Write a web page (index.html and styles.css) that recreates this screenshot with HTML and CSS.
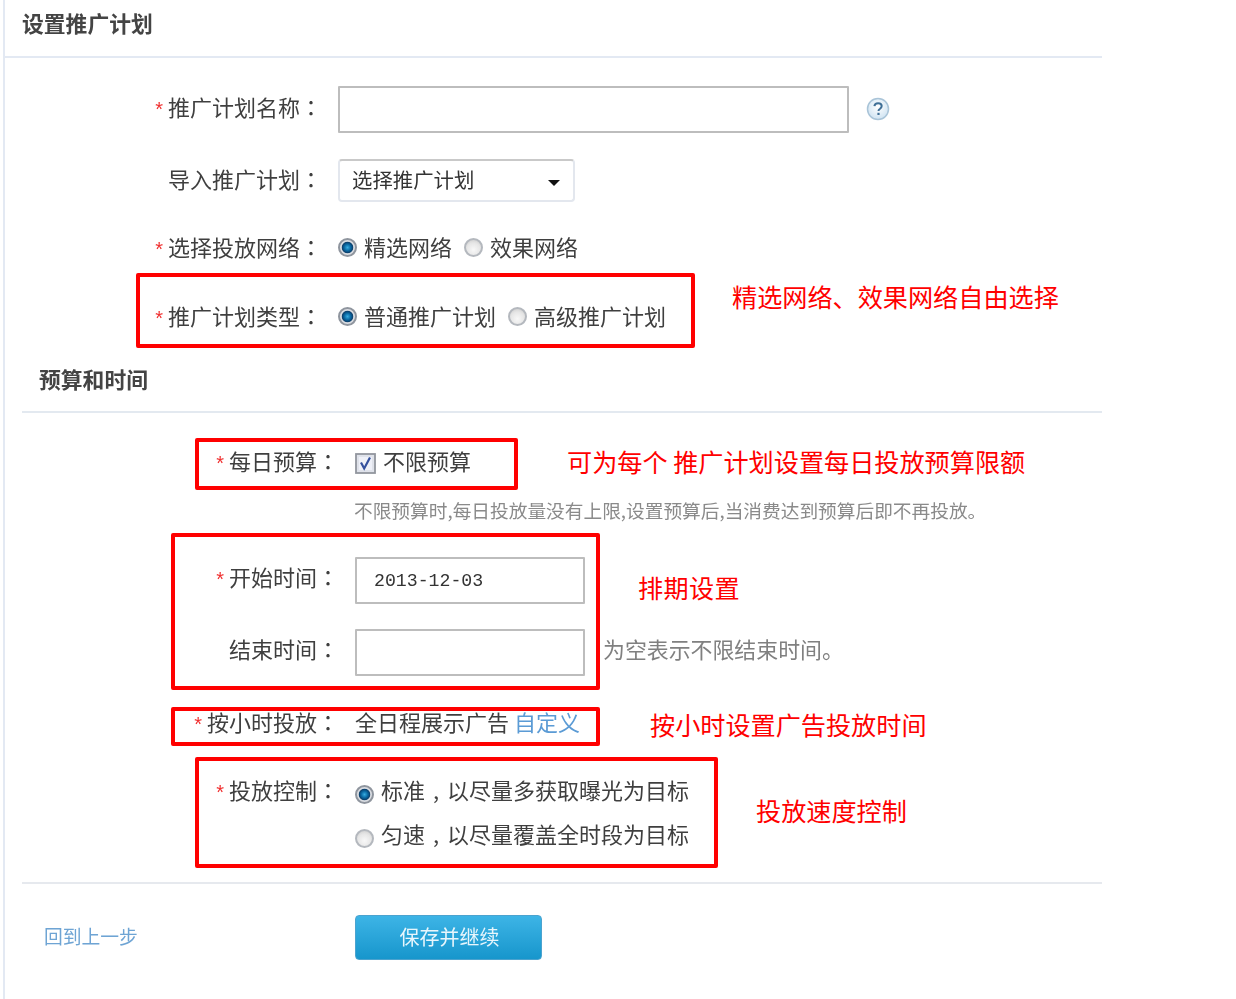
FILE: index.html
```html
<!DOCTYPE html>
<html lang="zh-CN">
<head>
<meta charset="utf-8">
<title>设置推广计划</title>
<link rel="stylesheet" href="styles.css">
</head>
<body>
<div class="page">
  <main class="panel">
    <h1 class="panel-title">设置推广计划</h1>

    <section class="form-a">
      <div class="row row-input">
        <label class="label"><span class="star">*</span>推广计划名称<span class="punct" lang="zh-TW">：</span></label>
        <div class="field field-name"></div>
        <svg class="help" width="24" height="24" viewBox="0 0 24 24"><defs><radialGradient id="hg" cx="50%" cy="40%" r="60%"><stop offset="0" stop-color="#ffffff"/><stop offset="1" stop-color="#cfe3f2"/></radialGradient></defs><circle cx="12" cy="12" r="10.5" fill="url(#hg)" stroke="#a9c4d8" stroke-width="1.5"/><path d="M8.4 9.2c.2-2 1.7-3 3.7-3 2.1 0 3.6 1.1 3.6 2.9 0 1.5-.9 2.2-1.9 2.9-.9.6-1.3 1-1.3 2" fill="none" stroke="#3f6f96" stroke-width="2"/><rect x="11.4" y="15.8" width="2.2" height="2.2" fill="#3f6f96"/></svg>
      </div>
      <div class="row row-select">
        <label class="label">导入推广计划<span class="punct" lang="zh-TW">：</span></label>
        <div class="select"><span class="select-text">选择推广计划</span><i class="caret"></i></div>
      </div>
      <div class="row row-net">
        <label class="label"><span class="star">*</span>选择投放网络<span class="punct" lang="zh-TW">：</span></label>
        <span class="radio on"></span><span class="opt">精选网络</span>
        <span class="radio"></span><span class="opt">效果网络</span>
      </div>
      <div class="row row-type">
        <label class="label"><span class="star">*</span>推广计划类型<span class="punct" lang="zh-TW">：</span></label>
        <span class="radio on"></span><span class="opt">普通推广计划</span>
        <span class="radio"></span><span class="opt">高级推广计划</span>
      </div>
    </section>

    <h2 class="section-title">预算和时间</h2>

    <section class="form-b">
      <div class="row row-budget">
        <label class="label"><span class="star">*</span>每日预算<span class="punct" lang="zh-TW">：</span></label>
        <svg class="check" width="21" height="21" viewBox="0 0 21 21"><rect x="1" y="1" width="19" height="19" fill="#dfe2ea" stroke="#92969e" stroke-width="1.8"/><rect x="4" y="4" width="13" height="13" fill="#eef0f8"/><path d="M6 9.5l3.2 6L15 4.5" fill="none" stroke="#34509e" stroke-width="2.2"/></svg>
        <span class="opt">不限预算</span>
      </div>
      <p class="hint">不限预算时,每日投放量没有上限,设置预算后,当消费达到预算后即不再投放。</p>
      <div class="row row-start">
        <label class="label"><span class="star">*</span>开始时间<span class="punct" lang="zh-TW">：</span></label>
        <div class="field field-date"><span class="date">2013-12-03</span></div>
      </div>
      <div class="row row-end">
        <label class="label">结束时间<span class="punct" lang="zh-TW">：</span></label>
        <div class="field field-date"></div>
        <span class="note">为空表示不限结束时间。</span>
      </div>
      <div class="row row-hour">
        <label class="label"><span class="star">*</span>按小时投放<span class="punct" lang="zh-TW">：</span></label>
        <span class="plain">全日程展示广告</span><a class="link">自定义</a>
      </div>
      <div class="row row-ctrl">
        <label class="label"><span class="star">*</span>投放控制<span class="punct" lang="zh-TW">：</span></label>
        <span class="radio on low"></span><span class="opt">标准<span class="comma">,</span>以尽量多获取曝光为目标</span>
      </div>
      <div class="row row-ctrl2">
        <span class="label"></span>
        <span class="radio low"></span><span class="opt">匀速<span class="comma">,</span>以尽量覆盖全时段为目标</span>
      </div>
    </section>

    <div class="footer">
      <a class="back">回到上一步</a>
      <button class="save" type="button">保存并继续</button>
    </div>
  </main>

  <div class="box box-1"></div>
  <div class="box box-2"></div>
  <div class="box box-3"></div>
  <div class="box box-4"></div>
  <div class="box box-5"></div>
  <div class="note-red n1">精选网络、效果网络自由选择</div>
  <div class="note-red n2">可为每个 推广计划设置每日投放预算限额</div>
  <div class="note-red n3">排期设置</div>
  <div class="note-red n4">按小时设置广告投放时间</div>
  <div class="note-red n5">投放速度控制</div>
</div>
</body>
</html>
```
FILE: styles.css
```css
* { box-sizing: border-box; }
html, body { margin: 0; padding: 0; background: #fff; }
body {
  font-family: "Noto Sans CJK SC", "Liberation Sans", sans-serif;
  font-size: 22px;
  line-height: 30px;
  color: #3f3f3f;
}
.page { position: relative; width: 1236px; height: 999px; overflow: hidden; }
.panel {
  margin-left: 3px;
  width: 1099px;
  height: 999px;
  border-left: 2px solid #e3e9f3;
  filter: blur(0.35px);
}
.panel-title {
  margin: 0;
  height: 58px;
  padding: 7px 0 0 17px;
  font-size: 21.8px;
  line-height: 32px;
  font-weight: 700;
  color: #444;
  border-bottom: 2px solid #e3e9f3;
}
.row { display: flex; align-items: center; }
.label { flex: none; text-align: right; white-space: nowrap; margin-bottom: 6px; }
.star { font-family: "Liberation Sans", sans-serif; color: #f03030; font-size: 20px; line-height: 0; margin-right: 5px; }
.punct { font-family: "Noto Sans CJK TC", sans-serif; }
.comma { display: inline-block; width: 22px; text-align: center; }

.form-a .label { width: 317px; margin-right: 16px; }
.form-b .label { width: 334px; margin-right: 16px; }

.row-input { height: 47px; margin-top: 28px; }
.row-select { height: 43px; margin-top: 26px; }
.row-net { height: 30px; margin-top: 32px; }
.row-type { height: 30px; margin-top: 39px; }
.row-input .label { margin-bottom: 8px; }

.field { flex: none; background: #fff; border: 2px solid #bdbdbd; border-radius: 1px; }
.field-name { width: 511px; height: 47px; }
.help { margin: -2px 0 0 17px; }

.select {
  flex: none;
  display: flex;
  align-items: center;
  justify-content: space-between;
  width: 237px;
  height: 43px;
  padding: 0 13px 0 12px;
  background: #fff;
  border: 2px solid #e3e7ee;
  border-top-color: #c9c9c9;
  border-radius: 4px;
}
.select-text { font-size: 20.4px; color: #333; margin-bottom: 4px; }
.caret { width: 0; height: 0; border-style: solid; border-width: 6px 6px 0; border-color: #111 transparent transparent; margin-top: 5px; }

.radio {
  flex: none;
  width: 19px;
  height: 19px;
  margin-top: -3px;
  border-radius: 50%;
  border: 2px solid #b4b8be;
  background: radial-gradient(circle at 50% 65%, #f8f8f8 0, #e6e6e6 55%, #c6c6c6 100%);
}
.radio.on {
  background: radial-gradient(circle at 50% 50%, #38ace0 0, #0a6aa4 30%, #0b3f6c 50%, #d8dbe0 58%, #e6e8ec 100%);
  border-color: #8f959e;
}
.radio.low { margin-top: 7px; }
.opt { margin: 0 12px 6px 7px; white-space: nowrap; }

.section-title {
  margin: 32px 0 0 17px;
  height: 48px;
  padding: 0 0 0 17px;
  font-size: 21.8px;
  line-height: 28px;
  font-weight: 700;
  color: #444;
  border-bottom: 2px solid #e3e9f0;
}
.row-budget { height: 30px; margin-top: 35px; }
.hint {
  margin: 17px 0 0 349px;
  font-size: 18.7px;
  line-height: 30px;
  color: #8a8a8a;
  white-space: nowrap;
}
.row-start { height: 47px; margin-top: 32px; }
.row-end { height: 47px; margin-top: 25px; }
.row-start .label, .row-end .label { margin-bottom: 10px; }
.field-date { width: 230px; height: 47px; display: flex; align-items: center; padding-left: 17px; }
.date { font-family: "Liberation Mono", monospace; font-size: 18.2px; color: #333; }
.note { margin: 0 0 8px 18px; font-size: 21.9px; color: #808080; white-space: nowrap; }
.row-hour { height: 30px; margin-top: 32px; }
.row-hour .label, .row-ctrl .label, .row-ctrl .opt, .row-ctrl2 .opt, .plain, .link { margin-bottom: 4px; }
.plain { white-space: nowrap; }
.link { color: #5b9bd5; margin-left: 5px; white-space: nowrap; }
.row-ctrl { height: 30px; margin-top: 38px; }
.row-ctrl2 { height: 30px; margin-top: 14px; }

.footer {
  display: flex;
  align-items: center;
  margin: 32px 0 0 17px;
  padding: 31px 0 0 22px;
  border-top: 2px solid #e6e9ee;
}
.back { width: 311px; font-size: 18.8px; color: #6ea4d4; white-space: nowrap; margin-bottom: 4px; }
.save {
  width: 187px;
  height: 45px;
  padding: 0 0 2px 2px;
  font-family: inherit;
  font-size: 20px;
  line-height: 30px;
  color: #e8f6fc;
  background: linear-gradient(#3db4e6, #1796cc);
  border: 1px solid #4ba3cf;
  border-radius: 4px;
}

.box { position: absolute; border: 4px solid #f00; border-radius: 2px; }
.box-1 { left: 136px; top: 273px; width: 559px; height: 75px; }
.box-2 { left: 195px; top: 438px; width: 323px; height: 52px; }
.box-3 { left: 171px; top: 533px; width: 429px; height: 157px; }
.box-4 { left: 171px; top: 707px; width: 429px; height: 39px; }
.box-5 { left: 195px; top: 757px; width: 523px; height: 111px; }

.note-red {
  position: absolute;
  font-size: 25.15px;
  line-height: 34px;
  color: #f00;
  white-space: nowrap;
}
.n1 { left: 732px; top: 279px; }
.n2 { left: 567px; top: 444px; }
.n3 { left: 638px; top: 570px; letter-spacing: 0.4px; }
.n4 { left: 650px; top: 707px; }
.n5 { left: 756px; top: 793px; }
```
